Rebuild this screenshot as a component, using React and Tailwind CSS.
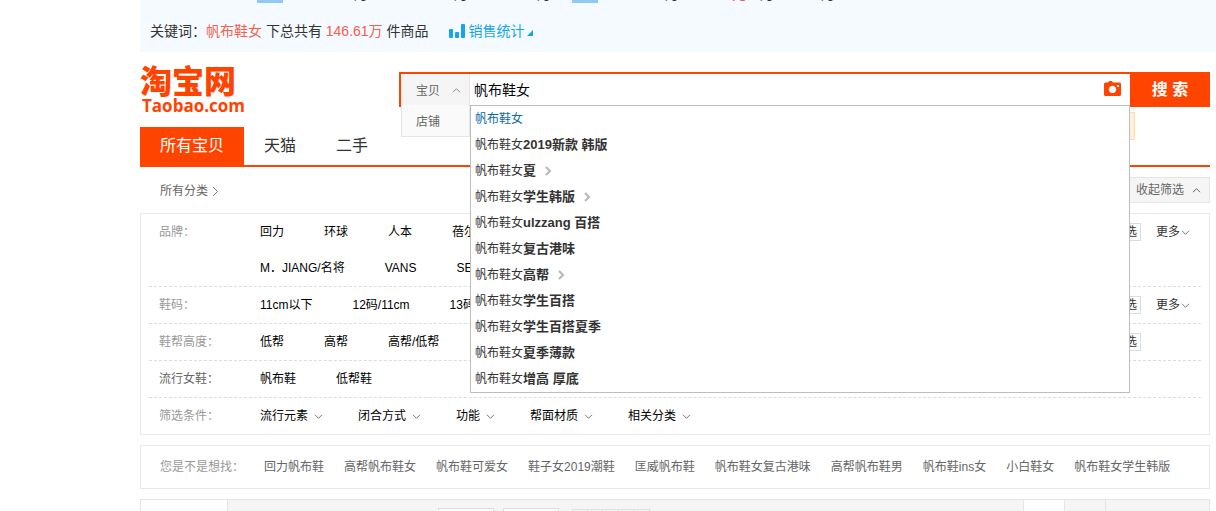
import React, { useState } from 'react';
import clsx from 'clsx';

const suggestions = [
  { text: '', active: true },
  { text: '2019新款 韩版' },
  { text: '夏', more: true },
  { text: '学生韩版', more: true },
  { text: 'ulzzang 百搭' },
  { text: '复古港味' },
  { text: '高帮', more: true },
  { text: '学生百搭' },
  { text: '学生百搭夏季' },
  { text: '夏季薄款' },
  { text: '增高 厚底' },
];

const filterRows = [
  {
    label: '品牌',
    lines: [
      ['回力', '环球', '人本', '蓓尔'],
      ['M．JIANG/名将', 'VANS', 'SENMA'],
    ],
    multi: true,
    more: true,
  },
  { label: '鞋码', lines: [['11cm以下', '12码/11cm', '13码']], multi: true, more: true },
  { label: '鞋帮高度', lines: [['低帮', '高帮', '高帮/低帮']], multi: true },
  { label: '流行女鞋', lines: [['帆布鞋', '低帮鞋']], dark: true },
];

const conditions = ['流行元素', '闭合方式', '功能', '帮面材质', '相关分类'];

const related = [
  '回力帆布鞋',
  '高帮帆布鞋女',
  '帆布鞋可爱女',
  '鞋子女2019潮鞋',
  '匡威帆布鞋',
  '帆布鞋女复古港味',
  '高帮帆布鞋男',
  '帆布鞋ins女',
  '小白鞋女',
  '帆布鞋女学生韩版',
];

const Chevron = ({ className }) => (
  <svg viewBox="0 0 9 9" className={clsx('w-[9px] h-[9px] shrink-0', className)} fill="none" stroke="currentColor" aria-hidden="true">
    <path d="M1 2.8 L4.5 6.3 L8 2.8" />
  </svg>
);

const CameraIcon = () => (
  <svg viewBox="0 0 17 15" className="w-[17px] h-[15px]" aria-hidden="true">
    <path
      fill="#ff4400"
      fillRule="evenodd"
      d="M4 1.5 L5 0 H8 L9 1.5 H15.5 Q17 1.5 17 3 V13.5 Q17 15 15.5 15 H1.5 Q0 15 0 13.5 V3 Q0 1.5 1.5 1.5 Z M8.5 4.7 a3.7 3.7 0 1 0 0.01 0 Z M13 4 V6 H15 V4 Z"
    />
  </svg>
);

// Plugin bar above the site header
const StatsBar = () => (
  <section className="bg-[#f4faff] h-[52px] overflow-hidden text-sm text-[#333]">
    <div className="h-[3px] flex items-end pl-[117px] leading-none whitespace-nowrap overflow-hidden [&>span]:pb-[2px]">
      <i className="w-[26px] h-[3px] bg-[#8fcaf5]" />
      <span className="ml-[71px]">月</span>
      <span className="ml-[86px]">月</span>
      <span className="ml-[69px]">月</span>
      <i className="w-[26px] h-[3px] ml-[21px] bg-[#8fcaf5]" />
      <span className="ml-[67px]">月</span>
      <span className="ml-[53px] text-[#f5604a]">元</span>
      <span className="ml-[14px]">月</span>
      <span className="ml-[47px]">月</span>
    </div>
    <div className="h-[49px] pt-[6px] pl-[10px] flex items-center whitespace-nowrap">
      <p>
        关键词：<span className="text-[#f5604a]">帆布鞋女</span> 下总共有 <span className="text-[#f5604a]">146.61万</span> 件商品
      </p>
      <a href="#stats" className="ml-5 flex items-center text-[#14a5ee]">
        <svg viewBox="0 0 16 14" className="w-4 h-[14px] mr-1" fill="currentColor" aria-hidden="true">
          <rect x="0" y="5" width="4" height="9" rx="1" />
          <rect x="6" y="8" width="4" height="6" rx="1" />
          <rect x="12" y="0" width="4" height="14" rx="1" />
        </svg>
        销售统计
        <svg viewBox="0 0 6 6" className="w-[6px] h-[6px] ml-[2px] mt-1" fill="currentColor" aria-hidden="true">
          <path d="M6 0 V6 H0 Z" />
        </svg>
      </a>
    </div>
  </section>
);

const Logo = () => (
  <a href="#home" className="w-[259px] shrink-0 text-[#ff4400] font-bold">
    <span className="block -mt-[6px] text-[32px] leading-[32px] font-black">淘宝网</span>
    <span className="block pl-[2px] text-[17px] leading-[16px] font-['Open_Sans',sans-serif]">Taobao.com</span>
  </a>
);

const SearchBox = () => {
  const [query, setQuery] = useState('帆布鞋女');

  return (
    <form className="relative flex-1 flex h-[35px]" onSubmit={e => e.preventDefault()}>
      <div className="flex-1 flex border-t-2 border-l-2 border-[#ff4400]">
        <div className="w-[69px] shrink-0 text-[#666]">
          <button type="button" className="w-full h-[31px] pt-[2px] pl-[15px] pr-2 flex items-center justify-between bg-[#f5f5f5] border-r border-[#e5e5e5]">
            宝贝
            <Chevron className="rotate-180 text-[#888]" />
          </button>
          <button type="button" className="w-full h-8 pt-[2px] pl-[14px] flex items-center bg-[#fafafa] border border-t-0 border-[#e5e5e5]">
            店铺
          </button>
        </div>
        <input
          type="text"
          aria-label="搜索宝贝"
          className="flex-1 min-w-0 pl-1 pb-[2px] text-sm text-black outline-none"
          value={query}
          onChange={e => setQuery(e.target.value)}
        />
        <button type="button" aria-label="图片搜索" className="px-[9px] pb-1">
          <CameraIcon />
        </button>
      </div>
      <button type="submit" className="w-20 shrink-0 bg-[#ff4400] text-white text-base font-bold">
        搜 索
      </button>

      <div className="absolute top-10 right-[75px] w-40 h-7 bg-[#fff0dc] border border-[#ffdca8]" />
      <ul className="absolute top-[33px] left-[71px] right-20 z-10 bg-white border border-[#bdbdbd] text-[#333]">
        {suggestions.map(item => (
          <li key={item.text}>
            <a href="#s" className={clsx('h-[26px] pl-1 flex items-center', item.active && 'text-[#0a6aa8]')}>
              帆布鞋女<b className="text-[13px]">{item.text}</b>
              {item.more && (
                <svg viewBox="0 0 7 10" className="w-[7px] h-[10px] ml-[9px]" fill="none" stroke="#b5b8bb" strokeWidth="2" aria-hidden="true">
                  <path d="M1 1 L5 5 L1 9" />
                </svg>
              )}
            </a>
          </li>
        ))}
      </ul>
    </form>
  );
};

const Tabs = () => (
  <nav className="h-10 flex border-b-2 border-[#ff4400] text-base text-[#333]">
    <a href="#all" className="px-5 flex items-center bg-[#ff4400] text-white">所有宝贝</a>
    <a href="#tmall" className="px-5 flex items-center">天猫</a>
    <a href="#used" className="px-5 flex items-center">二手</a>
  </nav>
);

const FilterRow = ({ row }) => (
  <div className="mx-2 px-[10px] flex border-b border-dashed border-[#ddd]">
    <div className={clsx('w-[101px] shrink-0 leading-9', row.dark ? 'text-[#666]' : 'text-[#999]')}>{row.label}：</div>
    <div className="flex-1">
      {row.lines.map((line, i) => (
        <div key={i} className="h-9 flex items-center gap-10">
          {line.map(name => <a key={name} href="#f">{name}</a>)}
        </div>
      ))}
    </div>
    <div className="h-9 flex items-center gap-[15px] text-[#333]">
      {row.multi && <button type="button" className="h-[18px] px-[3px] flex items-center border border-[#ddd]">多选</button>}
      <div className="w-[35px]">
        {row.more && (
          <button type="button" className="flex items-center gap-[1px]">
            更多
            <Chevron className="text-[#777]" />
          </button>
        )}
      </div>
    </div>
  </div>
);

const Filters = () => (
  <section className="border border-[#e8e8e8] text-black">
    {filterRows.map(row => <FilterRow key={row.label} row={row} />)}
    <div className="h-9 pl-[18px] flex items-center">
      <div className="w-[101px] shrink-0 text-[#999]">筛选条件：</div>
      <div className="flex gap-[35px]">
        {conditions.map(name => (
          <button key={name} type="button" className="flex items-center gap-[6px]">
            {name}
            <Chevron className="text-[#777]" />
          </button>
        ))}
      </div>
    </div>
  </section>
);

// Sort bar, its lower part runs under the fold
const SortBar = () => (
  <div className="mt-[10px] h-3 flex overflow-hidden bg-[#f5f5f5] border border-b-0 border-[#e5e5e5]">
    <div className="w-[87px] h-full bg-white border-r border-[#e5e5e5]" />
    <div className="flex-1 pl-[210px] pt-2 flex gap-[9px]">
      <input type="text" aria-label="最低价" className="w-14 h-6 bg-white border border-[#ddd]" />
      <input type="text" aria-label="最高价" className="w-14 h-6 bg-white border border-[#ddd]" />
      <div className="w-[78px] h-6 mt-[1px] ml-1 grid grid-cols-5 border border-[#e0e0e0] divide-x divide-[#e0e0e0]">
        <i /><i /><i /><i /><i />
      </div>
    </div>
    <div className="w-[42px] h-full bg-white border-x border-[#e5e5e5]" />
    <div className="w-10 h-full" />
    <div className="w-[104px] h-full border-l border-[#e5e5e5]" />
  </div>
);

const App = () => (
  <div className="pl-[140px] bg-white text-xs font-['Liberation_Sans','Noto_Sans_CJK_SC',sans-serif]">
    <StatsBar />
    <main className="pr-[6px] whitespace-nowrap">
      <header className="h-[75px] pt-5 flex items-start">
        <Logo />
        <SearchBox />
      </header>
      <Tabs />

      <div className="py-[10px] pl-5 flex items-center justify-between text-[#666]">
        <a href="#cat" className="pt-[2px] flex items-center gap-1">
          所有分类
          <svg viewBox="0 0 7 11" className="w-[7px] h-[11px]" fill="none" stroke="#777" aria-hidden="true">
            <path d="M1 1 L5.5 5.5 L1 10" />
          </svg>
        </a>
        <button type="button" className="h-[26px] px-2 flex items-center gap-2 bg-[#f5f5f5] border border-[#e5e5e5]">
          收起筛选
          <Chevron className="rotate-180" />
        </button>
      </div>

      <Filters />

      <section className="mt-[10px] h-11 pl-[19px] flex items-center gap-5 border border-[#e8e8e8] text-[#666]">
        <span className="text-[#999]">您是不是想找：</span>
        {related.map(name => <a key={name} href="#r">{name}</a>)}
      </section>

      <SortBar />
    </main>
  </div>
);

export default App;
